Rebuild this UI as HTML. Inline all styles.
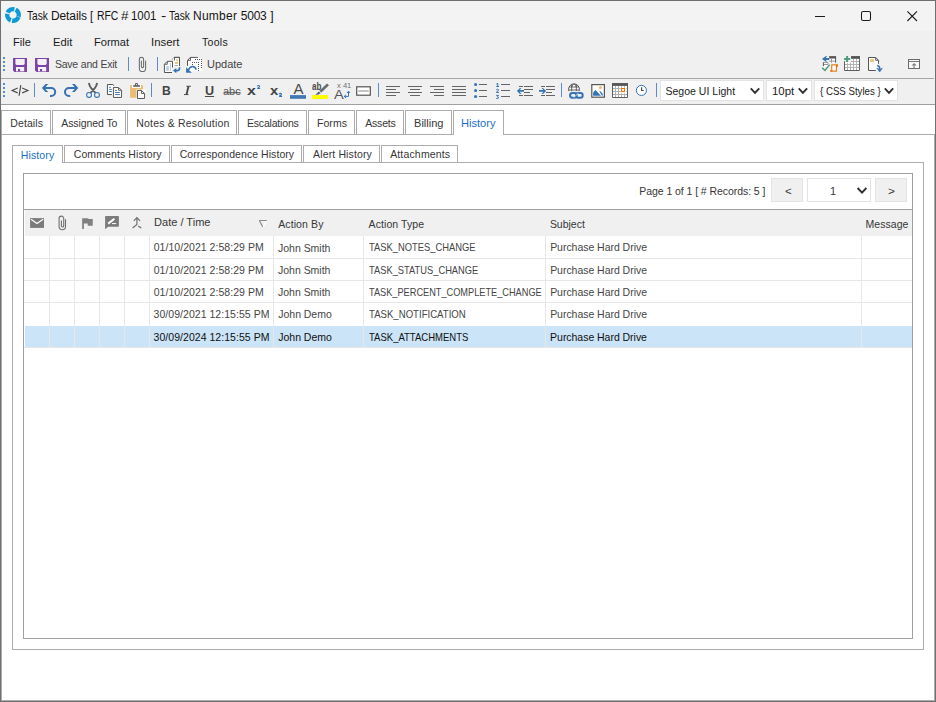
<!DOCTYPE html>
<html><head><meta charset="utf-8"><title>Task Details</title>
<style>
html,body{margin:0;padding:0;}
body{width:936px;height:702px;overflow:hidden;background:#fff;font-family:"Liberation Sans",sans-serif;position:relative;}
.a{position:absolute;box-sizing:border-box;}
.t{position:absolute;white-space:pre;transform-origin:0 0;}
.tab{position:absolute;box-sizing:border-box;border:1px solid #acacac;border-bottom:none;background:#fff;}
.vsep{position:absolute;width:1px;background:#5b8bd0;}
.dot{position:absolute;width:2px;height:2px;background:#4a8fd8;}
.cl{position:absolute;width:1px;background:#e7e7e7;}
.rl{position:absolute;height:1px;background:#e7e7e7;}
svg{position:absolute;overflow:visible;}
</style></head><body>
<!-- window frame -->
<div class="a" style="left:0;top:0;width:936px;height:702px;background:#6f6f6f;"></div>
<div class="a" style="left:1px;top:1px;width:934px;height:700px;background:#fff;"></div>
<!-- title + chrome -->
<div class="a" style="left:1px;top:1px;width:934px;height:30px;background:#f3f3f3;"></div>
<div class="a" style="left:1px;top:31px;width:934px;height:73px;background:#f0f0f0;"></div>
<div class="a" style="left:1px;top:78px;width:933px;height:1px;background:#a6a6a6;"></div>
<div class="a" style="left:1px;top:104px;width:934px;height:1px;background:#a0a0a0;"></div>
<!-- main tab page -->
<div class="a" style="left:1px;top:134px;width:934px;height:567px;border:1px solid #acacac;background:#fff;"></div>
<!-- main tabs -->
<div class="tab" style="left:1px;top:110px;width:50px;height:24px;"></div>
<div class="tab" style="left:52px;top:110px;width:74px;height:24px;"></div>
<div class="tab" style="left:127px;top:110px;width:110px;height:24px;"></div>
<div class="tab" style="left:238px;top:110px;width:69px;height:24px;"></div>
<div class="tab" style="left:308px;top:110px;width:47px;height:24px;"></div>
<div class="tab" style="left:356px;top:110px;width:48px;height:24px;"></div>
<div class="tab" style="left:405px;top:110px;width:47px;height:24px;"></div>
<div class="tab" style="left:453px;top:110px;width:51px;height:25px;"></div>
<!-- sub tab panel -->
<div class="a" style="left:12px;top:162px;width:912px;height:488px;border:1px solid #acacac;background:#fff;"></div>
<div class="tab" style="left:12px;top:145px;width:51px;height:18px;"></div>
<div class="tab" style="left:64px;top:145px;width:106px;height:17px;"></div>
<div class="tab" style="left:171px;top:145px;width:131px;height:17px;"></div>
<div class="tab" style="left:303px;top:145px;width:77px;height:17px;"></div>
<div class="tab" style="left:381px;top:145px;width:77px;height:17px;"></div>
<!-- grid container -->
<div class="a" style="left:23px;top:173px;width:890px;height:466px;border:1px solid #a0a0a0;background:#fff;"></div>
<!-- pager -->
<div class="a" style="left:771px;top:178px;width:32px;height:24px;background:#f0f0f0;border:1px solid #e3e3e3;"></div>
<div class="a" style="left:807px;top:178px;width:64px;height:24px;background:#fff;border:1px solid #e3e3e3;"></div>
<div class="a" style="left:875px;top:178px;width:32px;height:24px;background:#f0f0f0;border:1px solid #e3e3e3;"></div>
<!-- header -->
<div class="a" style="left:24px;top:209px;width:888px;height:1px;background:#a0a0a0;"></div>
<div class="a" style="left:25px;top:210px;width:887px;height:26px;background:#f0f0f0;"></div>
<!-- selected row -->
<div class="a" style="left:25px;top:326px;width:887px;height:21px;background:#cce4f7;"></div>
<!-- grid lines -->
<div class="cl" style="left:49px;top:236px;height:111px;"></div>
<div class="cl" style="left:74px;top:236px;height:111px;"></div>
<div class="cl" style="left:99px;top:236px;height:111px;"></div>
<div class="cl" style="left:124px;top:236px;height:111px;"></div>
<div class="cl" style="left:149px;top:236px;height:111px;"></div>
<div class="cl" style="left:273px;top:236px;height:111px;"></div>
<div class="cl" style="left:363px;top:236px;height:111px;"></div>
<div class="cl" style="left:545px;top:236px;height:111px;"></div>
<div class="cl" style="left:861px;top:236px;height:111px;"></div>
<div class="rl" style="left:24px;top:258px;width:888px;"></div>
<div class="rl" style="left:24px;top:280px;width:888px;"></div>
<div class="rl" style="left:24px;top:302px;width:888px;"></div>
<div class="rl" style="left:24px;top:347px;width:888px;"></div>
<!-- toolbar combos -->
<div class="a" style="left:660px;top:80px;width:104px;height:21px;background:#fff;border:1px solid #e3e3e3;"></div>
<div class="a" style="left:766px;top:80px;width:46px;height:21px;background:#fff;border:1px solid #e3e3e3;"></div>
<div class="a" style="left:814px;top:80px;width:84px;height:21px;background:#fff;border:1px solid #e3e3e3;"></div>
<!-- toolbar grips and separators -->
<div class="dot" style="left:3px;top:57px;"></div>
<div class="dot" style="left:3px;top:61px;"></div>
<div class="dot" style="left:3px;top:65px;"></div>
<div class="dot" style="left:3px;top:69px;"></div>
<div class="dot" style="left:3px;top:83px;"></div>
<div class="dot" style="left:3px;top:87px;"></div>
<div class="dot" style="left:3px;top:91px;"></div>
<div class="dot" style="left:3px;top:95px;"></div>
<div class="vsep" style="left:128px;top:57px;height:14px;"></div>
<div class="vsep" style="left:157px;top:57px;height:14px;"></div>
<div class="vsep" style="left:34px;top:83px;height:14px;"></div>
<div class="vsep" style="left:151px;top:83px;height:14px;"></div>
<div class="vsep" style="left:378px;top:83px;height:14px;"></div>
<div class="vsep" style="left:561px;top:83px;height:14px;"></div>
<div class="vsep" style="left:656px;top:83px;height:14px;"></div>
<!-- icons -->
<svg style="left:0;top:0" width="936" height="702" viewBox="0 0 936 702">
<circle cx="13" cy="15" r="5.8" fill="none" stroke="#0d9ad7" stroke-width="4.4" stroke-dasharray="7.7 1.41" transform="rotate(20 13 15)"/>
<path d="M815 16.5h10" stroke="#1b1b1b" stroke-width="1" fill="none"/>
<rect x="861.5" y="11.5" width="9" height="9" rx="1.6" fill="none" stroke="#1b1b1b" stroke-width="1.05"/>
<path d="M907.4 11.4L917 21M917 11.4L907.4 21" stroke="#1b1b1b" stroke-width="1.1" fill="none"/>
<g transform="translate(13,58)"><path d="M0 0h14v14H1.6L0 12.4z" fill="#7b44a6"/><path d="M2.4 1h9.3v4.6q0 1.4-1.4 1.4H3.8q-1.4 0-1.4-1.4z" fill="#f3f1f4"/><path d="M3 9h8.2v4.4H3z" fill="#f3f1f4"/><rect x="5" y="11" width="2.1" height="2.4" fill="#7b44a6"/></g>
<g transform="translate(35,58)"><path d="M0 0h14v14H1.6L0 12.4z" fill="#7b44a6"/><path d="M2.4 1h9.3v4.6q0 1.4-1.4 1.4H3.8q-1.4 0-1.4-1.4z" fill="#f3f1f4"/><path d="M3 9h8.2v4.4H3z" fill="#f3f1f4"/><rect x="5" y="11" width="2.1" height="2.4" fill="#7b44a6"/></g>
<path d="M141.4 61V66.5a1.1 1.1 0 0 0 2.2 0V59.4a2.125 2.125 0 0 0-4.25 0V68.4a3.125 3.125 0 0 0 6.25 0V61" fill="none" stroke="#6b6b6b" stroke-width="1.05" stroke-linecap="round"/>
<path d="M174.4 60.5V57.4H179.5V66" fill="#fff" stroke="#555555" stroke-width="1"/>
<path d="M171.9 59.5L174.4 57.4" stroke="#555555" stroke-width="1" stroke-dasharray="1 1" fill="none"/>
<rect x="173" y="58" width="6" height="8.5" fill="#fff"/>
<path d="M174.4 60.5V57.4H179.5V65.8" fill="none" stroke="#555555" stroke-width="1"/>
<rect x="176.2" y="59.1" width="1.7" height="1.7" fill="#e9bd74"/><rect x="175" y="62" width="3" height="1.8" fill="#e9bd74"/><rect x="174.3" y="65" width="3.6" height="0.8" fill="#999"/>
<path d="M164.4 64.3L167.3 61.35H172.5V72.5H164.4z" fill="#fff" stroke="#555555" stroke-width="1" stroke-linejoin="miter"/>
<path d="M167.3 61.6V64.3H164.6" fill="none" stroke="#555555" stroke-width="0.9"/>
<rect x="166.2" y="66.1" width="2.6" height="4.7" fill="#b9d0e8"/><rect x="169.9" y="63" width="1.1" height="7.8" fill="#b9d0e8"/>
<rect x="172" y="67.5" width="8.5" height="6" fill="#f0f0f0"/>
<path d="M179.5 67.2V68.2Q179.5 70.6 177 70.6H175" fill="none" stroke="#3572b4" stroke-width="1.6"/>
<path d="M173 70.6L176.3 68V73.2z" fill="#3572b4"/>
<path d="M188 65.8V60.7L190.4 57.9H202V71H188z" fill="#fff" opacity="0.9"/>
<path d="M187.5 65.8V60.5L190.2 57.4H197.9" fill="none" stroke="#555555" stroke-width="1"/>
<path d="M190.5 57.6V60.4H187.7" fill="none" stroke="#555555" stroke-width="0.9"/>
<rect x="195" y="59" width="1" height="1" fill="#555555"/><rect x="197" y="59" width="1" height="1" fill="#555555"/><rect x="199" y="59" width="1" height="1" fill="#555555"/><rect x="201" y="59" width="1" height="1" fill="#555555"/><rect x="201" y="61" width="1" height="1" fill="#555555"/><rect x="201" y="63" width="1" height="1" fill="#555555"/><rect x="201" y="65" width="1" height="1" fill="#555555"/><rect x="201" y="67" width="1" height="1" fill="#555555"/><rect x="192" y="62" width="1" height="1" fill="#555555"/><rect x="194" y="62" width="1" height="1" fill="#555555"/><rect x="196" y="62" width="1" height="1" fill="#555555"/><rect x="198" y="62" width="1" height="1" fill="#555555"/><rect x="192" y="64" width="1" height="1" fill="#555555"/><rect x="198" y="64" width="1" height="1" fill="#555555"/><rect x="198" y="66" width="1" height="1" fill="#555555"/><rect x="198" y="68" width="1" height="1" fill="#555555"/><rect x="198" y="70" width="1" height="1" fill="#555555"/>
<path d="M196.3 69.6Q195 66.4 192.4 66.6Q189.6 67 188.2 70.6" fill="none" stroke="#3572b4" stroke-width="1.5"/>
<path d="M186.1 67.3V72.8H191.9L189.6 70.8z" fill="#3572b4"/>
<rect x="829" y="56" width="7.2" height="7" fill="#fff"/>
<rect x="829.1" y="56.1" width="7" height="2.4" fill="#555555"/>
<path d="M835.6 58V62.7" stroke="#555555" stroke-width="1"/>
<path d="M829 61.2H835M831.5 58.5V62.7" stroke="#8e8e8e" stroke-width="0.9" fill="none"/>
<rect x="823" y="62" width="6" height="5" fill="#fff"/>
<path d="M823.4 62.3V66.2" stroke="#555555" stroke-width="1"/>
<path d="M823.4 62.4H828V64.5H824" stroke="#8e8e8e" stroke-width="0.9" fill="none"/>
<path d="M821.9 58.9L826 55.9H827L825.8 58H829.2V59.9H825.8L827 61.8H826z" fill="#3572b4"/>
<path d="M822.2 67.9L825 70.5L829.6 64.6" fill="none" stroke="#4a9e7c" stroke-width="1.5"/>
<rect x="831.75" y="64.85" width="4.6" height="6.3" fill="#fff" stroke="#e8730c" stroke-width="1.1"/>
<path d="M836.3 64.3H837.3Q838 64.3 838 65V66.7H836.3z" fill="#e8730c"/><rect x="830" y="70.3" width="2.3" height="1.4" fill="#e8730c"/>
<rect x="844.1" y="56.1" width="15.7" height="14.7" fill="#b4b4b4"/>
<rect x="844.1" y="56.1" width="15.7" height="2.6" fill="#555555"/>
<path d="M844.6 56.1V70.4H859.3V56.1" fill="none" stroke="#555555" stroke-width="1"/>
<rect x="845" y="59" width="2" height="2" fill="#fff"/><rect x="845" y="62" width="2" height="2" fill="#fff"/><rect x="845" y="65" width="2" height="2" fill="#fff"/><rect x="845" y="68" width="2" height="2" fill="#fff"/><rect x="848" y="59" width="2" height="2" fill="#fff"/><rect x="848" y="62" width="2" height="2" fill="#fff"/><rect x="848" y="65" width="2" height="2" fill="#fff"/><rect x="848" y="68" width="2" height="2" fill="#fff"/><rect x="851" y="59" width="2" height="2" fill="#fff"/><rect x="851" y="62" width="2" height="2" fill="#fff"/><rect x="851" y="65" width="2" height="2" fill="#fff"/><rect x="851" y="68" width="2" height="2" fill="#fff"/><rect x="854" y="59" width="2" height="2" fill="#fff"/><rect x="854" y="62" width="2" height="2" fill="#fff"/><rect x="854" y="65" width="2" height="2" fill="#fff"/><rect x="854" y="68" width="2" height="2" fill="#fff"/><rect x="857" y="59" width="2" height="2" fill="#fff"/><rect x="857" y="62" width="2" height="2" fill="#fff"/><rect x="857" y="65" width="2" height="2" fill="#fff"/><rect x="857" y="68" width="2" height="2" fill="#fff"/>
<rect x="843" y="55" width="8" height="8" fill="#f0f0f0"/><rect x="848" y="59" width="2" height="2" fill="#fff"/><rect x="845" y="62.1" width="2" height="0.9" fill="#fff"/><rect x="848" y="62.1" width="2" height="0.9" fill="#fff"/>
<path d="M844.1 61.2V63" stroke="#555555" stroke-width="1" transform="translate(0.5,0)"/>
<path d="M846 56.1h2v2h2v2h-2v2h-2v-2h-2v-2h2z" fill="#4a9e7c" transform="translate(0.1,0)"/>
<path d="M868.5 57.5H875.8L878.55 60.4V70.5H868.5z" fill="#fff"/>
<path d="M878.55 63.8V60.4L875.8 57.5H868.5V70.5H875.8" fill="none" stroke="#555555" stroke-width="1"/>
<path d="M875.7 57.7V60.3H878.4" fill="none" stroke="#555555" stroke-width="0.9"/>
<rect x="870.2" y="59.2" width="3.7" height="2.7" fill="#e9bd74"/>
<rect x="876.5" y="64.5" width="6" height="8" fill="#f0f0f0"/>
<path d="M877.2 65.6Q879.7 66 879.7 68.5V69.5" fill="none" stroke="#3572b4" stroke-width="1.5"/>
<path d="M877 68.2L879.7 69.6L882.3 68.2L879.7 72z" fill="#3572b4" stroke="#3572b4" stroke-width="0.6" stroke-linejoin="round"/>
<rect x="908.5" y="59.5" width="11" height="9" fill="#f9f9f9" stroke="#6b6b6b" stroke-width="1"/>
<path d="M908.5 61.5H919.5" stroke="#6b6b6b" stroke-width="0.9"/>
<path d="M911.6 65.4L914.1 62.9L916.6 65.4z" fill="#7d7d7d"/><rect x="913.4" y="65" width="1.4" height="3" fill="#9a9a9a"/>
<path d="M17.7 88.05L12.2 90.45L17.7 92.85M22.2 88.05L27.9 90.45L22.2 92.85" fill="none" stroke="#4a4a4a" stroke-width="1.15"/>
<path d="M20.8 85.15L19.1 95.75" fill="none" stroke="#4a4a4a" stroke-width="1.2"/>
<g ><path d="M45 88H51.2A4 4 0 0 1 51.2 96H50" fill="none" stroke="#3572b4" stroke-width="2"/><path d="M41.9 88.05L45.5 84.1H48.2L45.4 87.2V88.9L48.2 91.9H45.5z" fill="#3572b4"/></g>
<g transform="translate(120.2,0) scale(-1,1)"><path d="M45 88H51.2A4 4 0 0 1 51.2 96H50" fill="none" stroke="#3572b4" stroke-width="2"/><path d="M41.9 88.05L45.5 84.1H48.2L45.4 87.2V88.9L48.2 91.9H45.5z" fill="#3572b4"/></g>
<path d="M89.1 83.6Q89.4 86 91.4 88.4L95 92.3M96.9 83.6Q96.6 86 94.6 88.4L91 92.3" fill="none" stroke="#5c5c5c" stroke-width="1.9" stroke-linecap="round"/>
<circle cx="89.05" cy="94.9" r="2.45" fill="none" stroke="#3572b4" stroke-width="1.05"/><circle cx="97" cy="94.9" r="2.45" fill="none" stroke="#3572b4" stroke-width="1.05"/>
<path d="M107.45 84.5H112.75L114 85.6V94.55H107.45z" fill="#fff"/>
<path d="M111.9 94.55H107.45V84.5H112.75L114.2 85.8" fill="none" stroke="#555555" stroke-width="1"/>
<path d="M109.2 87.4H110.9M109.2 89.45H111.9M109.2 91.5H111.9" stroke="#3572b4" stroke-width="0.95"/>
<path d="M112.4 86.6H119L122.6 89.8V98.4H112.4z" fill="#fff" opacity="0.85"/>
<path d="M113.4 87.55H118.55L121.6 90.1V97.45H113.4z" fill="#fff" stroke="#555555" stroke-width="1"/>
<path d="M118.5 87.8V90.3H121.4" fill="none" stroke="#555555" stroke-width="0.9"/>
<path d="M115.1 90.45H116.85M115.1 92.5H119.9M115.1 94.55H119.9" stroke="#3572b4" stroke-width="0.95"/>
<rect x="130.1" y="85" width="12.8" height="12.8" rx="0.6" fill="#e9bd74"/>
<path d="M132 84.5H141V88H132z" fill="#fbfbfb"/>
<rect x="133.2" y="85.15" width="6.7" height="1.6" fill="#5a5a5a"/><path d="M135.5 85.3V83.6H137.4V85.3" fill="none" stroke="#5a5a5a" stroke-width="1"/>
<rect x="136.4" y="89.4" width="9.3" height="10" fill="#fbfbfb"/>
<path d="M137.45 90.45H141.55L144.6 93.5V98.5H137.45z" fill="#fff" stroke="#555555" stroke-width="1"/>
<path d="M141.5 90.7V93.5H144.4" fill="none" stroke="#555555" stroke-width="0.9"/>
<rect x="290" y="95.1" width="16" height="3.7" fill="#3f78b5"/>
<rect x="312" y="95" width="16.2" height="4" fill="#ffff00"/>
<path d="M327 83.4L329 85.2L321.4 92.6L319.4 90.8z" fill="#6a6a6a"/><path d="M318.8 91.4L320.8 93.2L317.6 94.8L315.4 94.7z" fill="#5c5c66"/>
<path d="M348.5 91.6V96.4H344.4" fill="none" stroke="#3572b4" stroke-width="1"/><path d="M346.9 93L348.5 91.2L350.1 93M346 94.8L344.2 96.4L346 98" fill="none" stroke="#3572b4" stroke-width="1"/>
<rect x="356.7" y="86.8" width="13.6" height="8.4" fill="#fff" stroke="#555555" stroke-width="1.2"/><rect x="358.2" y="90.3" width="10.5" height="1.4" fill="#aaaaaa"/>
<rect x="386" y="86" width="14" height="1" fill="#646464"/><rect x="386" y="89" width="10" height="1" fill="#646464"/><rect x="386" y="92" width="14" height="1" fill="#646464"/><rect x="386" y="95" width="10" height="1" fill="#646464"/>
<rect x="408" y="86" width="14" height="1" fill="#646464"/><rect x="410" y="89" width="10" height="1" fill="#646464"/><rect x="408" y="92" width="14" height="1" fill="#646464"/><rect x="410" y="95" width="10" height="1" fill="#646464"/>
<rect x="430" y="86" width="14" height="1" fill="#646464"/><rect x="434" y="89" width="10" height="1" fill="#646464"/><rect x="430" y="92" width="14" height="1" fill="#646464"/><rect x="434" y="95" width="10" height="1" fill="#646464"/>
<rect x="452" y="86" width="14" height="1" fill="#646464"/><rect x="452" y="89" width="14" height="1" fill="#646464"/><rect x="452" y="92" width="14" height="1" fill="#646464"/><rect x="452" y="95" width="14" height="1" fill="#646464"/>
<rect x="479" y="84" width="8" height="1" fill="#646464"/><rect x="479" y="90" width="8" height="1" fill="#646464"/><rect x="479" y="96" width="8" height="1" fill="#646464"/>
<circle cx="475.6" cy="84.5" r="1.55" fill="#3572b4"/><circle cx="475.6" cy="90.5" r="1.55" fill="#3572b4"/><circle cx="475.6" cy="96.5" r="1.55" fill="#3572b4"/>
<rect x="501" y="84" width="9" height="1" fill="#646464"/><rect x="501" y="90" width="9" height="1" fill="#646464"/><rect x="501" y="96" width="9" height="1" fill="#646464"/>
<path d="M496.3 84.2L497.8 83.3V86.4M496.2 86.5H499" fill="none" stroke="#3572b4" stroke-width="1"/>
<path d="M496.2 89.8Q497.4 88.8 498.5 89.7Q498.8 90.6 496.3 92.4H499" fill="none" stroke="#3572b4" stroke-width="1"/>
<path d="M496.2 95.4H498.6L497.3 96.8Q499 97 498.5 98.1Q497.6 98.8 496.1 98.3" fill="none" stroke="#3572b4" stroke-width="1"/>
<rect x="519" y="86" width="4" height="1" fill="#646464"/><rect x="524" y="86" width="9" height="1" fill="#646464"/><rect x="524" y="89" width="9" height="1" fill="#646464"/><rect x="524" y="92" width="6" height="1" fill="#646464"/><rect x="519" y="95" width="4" height="1" fill="#646464"/><rect x="524" y="95" width="9" height="1" fill="#646464"/>
<path d="M516.9 90.9L520 88H521.4L519.6 90H524V91.8H519.6L521.4 93.9H520z" fill="#3572b4"/>
<rect x="541" y="86" width="4" height="1" fill="#646464"/><rect x="546" y="86" width="9" height="1" fill="#646464"/><rect x="546" y="89" width="9" height="1" fill="#646464"/><rect x="546" y="92" width="6" height="1" fill="#646464"/><rect x="541" y="95" width="4" height="1" fill="#646464"/><rect x="546" y="95" width="9" height="1" fill="#646464"/>
<path d="M546.1 90.9L543 88H541.6L543.4 90H539V91.8H543.4L541.6 93.9H543z" fill="#3572b4"/>
<circle cx="574" cy="89.3" r="5.4" fill="#fff" stroke="#555555" stroke-width="1"/>
<path d="M569.2 87H578.8M568.7 90H579.3M571.7 84.6V92M576.3 84.6V92M571.7 87Q572 84.5 574 83.9Q576 84.5 576.3 87" fill="none" stroke="#555555" stroke-width="0.9"/>
<rect x="568" y="91.2" width="16.8" height="8.6" fill="#f0f0f0"/>
<rect x="570.1" y="93.1" width="6.6" height="4.6" rx="2.3" fill="none" stroke="#3572b4" stroke-width="2"/><rect x="576" y="93.1" width="6.7" height="4.6" rx="2.3" fill="none" stroke="#3572b4" stroke-width="2"/>
<path d="M573.6 97.6L578.5 93.2" stroke="#f0f0f0" stroke-width="0.9"/>
<rect x="591.8" y="84.6" width="12.6" height="12.6" fill="#fff" stroke="#555555" stroke-width="1.2"/>
<circle cx="600.5" cy="87.5" r="1.55" fill="#e9bd74"/>
<path d="M593.1 95.7V92.6L595.5 90L601 95.7z" fill="#3572b4"/><path d="M599.2 91.2H600.4L602.7 93.8V95.7H602z" fill="#3572b4"/>
<rect x="612.1" y="83.1" width="15.8" height="14.8" fill="#b0b0b0"/><rect x="612.1" y="83.1" width="15.8" height="2.7" fill="#555555"/>
<path d="M612.6 83.1V97.4H627.4V83.1" fill="none" stroke="#555555" stroke-width="1"/>
<rect x="613" y="86" width="2" height="2" fill="#fff"/><rect x="613" y="89" width="2" height="2" fill="#fff"/><rect x="613" y="92" width="2" height="2" fill="#fff"/><rect x="613" y="95" width="2" height="2" fill="#fff"/><rect x="616" y="86" width="2" height="2" fill="#fff"/><rect x="616" y="89" width="2" height="2" fill="#fff"/><rect x="616" y="92" width="2" height="2" fill="#fff"/><rect x="616" y="95" width="2" height="2" fill="#fff"/><rect x="619" y="86" width="2" height="2" fill="#fff"/><rect x="619" y="89" width="2" height="2" fill="#fff"/><rect x="619" y="92" width="2" height="2" fill="#fff"/><rect x="619" y="95" width="2" height="2" fill="#fff"/><rect x="622" y="86" width="2" height="2" fill="#fff"/><rect x="622" y="89" width="2" height="2" fill="#fff"/><rect x="622" y="92" width="2" height="2" fill="#fff"/><rect x="622" y="95" width="2" height="2" fill="#fff"/><rect x="625" y="86" width="2" height="2" fill="#fff"/><rect x="625" y="89" width="2" height="2" fill="#fff"/><rect x="625" y="92" width="2" height="2" fill="#fff"/><rect x="625" y="95" width="2" height="2" fill="#fff"/>
<rect x="620" y="87" width="6" height="6" fill="#fff"/><rect x="621.5" y="88.5" width="3" height="3" fill="#fff" stroke="#e8730c" stroke-width="1.1"/>
<rect x="621" y="87" width="1" height="1" fill="#c8c8c8"/><rect x="624" y="87" width="1" height="1" fill="#c8c8c8"/><rect x="620" y="88" width="1" height="1" fill="#c8c8c8"/><rect x="620" y="91" width="1" height="1" fill="#c8c8c8"/><rect x="626" y="88" width="1" height="1" fill="#c8c8c8"/><rect x="626" y="91" width="1" height="1" fill="#c8c8c8"/><rect x="621" y="93" width="1" height="1" fill="#c8c8c8"/><rect x="624" y="93" width="1" height="1" fill="#c8c8c8"/>
<circle cx="641.4" cy="90.4" r="5.05" fill="#fff" stroke="#3572b4" stroke-width="1"/><path d="M641.6 87.2V90.5H643.7" fill="none" stroke="#4a4a4a" stroke-width="1.2"/>
<path d="M750.8 88.4L755.0 92.80000000000001L759.1999999999999 88.4" fill="none" stroke="#2e2e2e" stroke-width="1.9"/>
<path d="M798.7 88.4L802.9000000000001 92.80000000000001L807.1 88.4" fill="none" stroke="#2e2e2e" stroke-width="1.9"/>
<path d="M884.8 88.4L889.0 92.80000000000001L893.1999999999999 88.4" fill="none" stroke="#2e2e2e" stroke-width="1.9"/>
<path d="M857.6 188.0L862.0 192.6L866.4 188.0" fill="none" stroke="#2e2e2e" stroke-width="1.9"/>
<rect x="30.1" y="218.1" width="13.9" height="9.8" fill="#7b7b7b"/><path d="M31 219.2L37 223.5L43.1 219.2" fill="none" stroke="#fff" stroke-width="1.2"/>
<path d="M61.4 220.5V225.75a1.15 1.15 0 0 0 2.3 0V218.4a2.3 2.3 0 0 0-4.6 0V226.5a3.2 3.2 0 0 0 6.4 0V219.2" fill="#f8f8f8" fill-opacity="0" stroke="#707070" stroke-width="1.1"/>
<path d="M82.15 218.15H88.3V219H92.75V225.85H87.7V223.6H83.9V228.9H82.15z" fill="#808080"/>
<path d="M105.1 216.6q0-0.6 0.6-0.6H118.3q0.6 0 0.6 0.6V226.1q0 0.6-0.6 0.6H108.2L105.1 229.3z" fill="#7b7b7b"/>
<path d="M108.2 223.6L114.4 218.7" stroke="#fff" stroke-width="2"/><path d="M112 223.6H116.2" stroke="#fff" stroke-width="1"/>
<path d="M136.9 217.9V224.4L132.6 228M133.8 220.9L136.9 217.7L140 220.9M138.2 225.9L141.3 228" fill="none" stroke="#707070" stroke-width="1.2"/>
<path d="M259 220.5H267" stroke="#8c8c8c" stroke-width="1"/><path d="M259.6 221L262.8 227" stroke="#8c8c8c" stroke-width="1.2"/><path d="M266.6 221L263.2 227" stroke="#ffffff" stroke-width="1.2"/>
<rect x="224" y="92.2" width="16.6" height="1" fill="#555555"/>
<rect x="204.9" y="96" width="9.2" height="0.95" fill="#444444"/>
<path transform="translate(0,0)" d="M257.1 86.2Q258.4 84.9 259.5 85.9Q260 87 257.3 88.45H260.2" fill="none" stroke="#3572b4" stroke-width="1.1"/>
<path transform="translate(21.9,7.9)" d="M257.1 86.2Q258.4 84.9 259.5 85.9Q260 87 257.3 88.45H260.2" fill="none" stroke="#3572b4" stroke-width="1.1"/>
<path d="M188.5 86.2L186.5 94.5" stroke="#444" stroke-width="1.8" fill="none"/><path d="M186.4 86.25H190.9M184 94.55H188.5" stroke="#444" stroke-width="0.95" fill="none"/>
</svg>
<!-- texts -->
<span class="t" style="left:26.6px;top:10px;font-size:12px;line-height:12px;color:#151515;transform:scaleX(0.8482);">Task</span>
<span class="t" style="left:50.98px;top:10px;font-size:12px;line-height:12px;color:#151515;letter-spacing:-0.106px;">Details</span>
<span class="t" style="left:90.1px;top:10px;font-size:12px;line-height:12px;color:#151515;transform:scaleX(0.9341);">[</span>
<span class="t" style="left:96.85px;top:10px;font-size:12px;line-height:12px;color:#151515;transform:scaleX(0.8664);">RFC</span>
<span class="t" style="left:120.82px;top:10px;font-size:12px;line-height:12px;color:#151515;transform:scaleX(1.1125);">#</span>
<span class="t" style="left:131.22px;top:10px;font-size:12px;line-height:12px;color:#151515;transform:scaleX(0.954);">1001</span>
<span class="t" style="left:160.68px;top:10px;font-size:12px;line-height:12px;color:#151515;transform:scaleX(1.3077);">-</span>
<span class="t" style="left:169.2px;top:10px;font-size:12px;line-height:12px;color:#151515;transform:scaleX(0.8482);">Task</span>
<span class="t" style="left:193.08px;top:10px;font-size:12px;line-height:12px;color:#151515;letter-spacing:0.223px;">Number</span>
<span class="t" style="left:240.87px;top:10px;font-size:12px;line-height:12px;color:#151515;letter-spacing:-0.271px;">5003</span>
<span class="t" style="left:270.31px;top:10px;font-size:12px;line-height:12px;color:#151515;">]</span>
<span class="t" style="left:13.06px;top:37px;font-size:10.5px;line-height:10.5px;color:#1b1b1b;transform:scaleX(1.0541);">File</span>
<span class="t" style="left:53.04px;top:37px;font-size:10.5px;line-height:10.5px;color:#1b1b1b;transform:scaleX(1.063);">Edit</span>
<span class="t" style="left:94.46px;top:37px;font-size:10.5px;line-height:10.5px;color:#1b1b1b;transform:scaleX(1.0553);">Format</span>
<span class="t" style="left:151.02px;top:37px;font-size:10.5px;line-height:10.5px;color:#1b1b1b;transform:scaleX(1.0841);">Insert</span>
<span class="t" style="left:202.09px;top:37px;font-size:10.5px;line-height:10.5px;color:#1b1b1b;letter-spacing:0.26px;">Tools</span>
<span class="t" style="left:54.88px;top:59px;font-size:10.5px;line-height:10.5px;color:#444444;letter-spacing:-0.198px;">Save and Exit</span>
<span class="t" style="left:207.42px;top:59px;font-size:10.5px;line-height:10.5px;color:#444444;transform:scaleX(1.0482);">Update</span>
<span class="t" style="left:665.48px;top:86px;font-size:10.5px;line-height:10.5px;color:#1b1b1b;letter-spacing:0.014px;">Segoe UI Light</span>
<span class="t" style="left:772.15px;top:86px;font-size:10.5px;line-height:10.5px;color:#1b1b1b;transform:scaleX(1.0909);">10pt</span>
<span class="t" style="left:819.57px;top:86px;font-size:10.5px;line-height:10.5px;color:#1b1b1b;transform:scaleX(0.9205);">{ CSS Styles }</span>
<span class="t" style="left:10.29px;top:118px;font-size:10.5px;line-height:10.5px;color:#363636;letter-spacing:0.088px;">Details</span>
<span class="t" style="left:61.27px;top:118px;font-size:10.5px;line-height:10.5px;color:#363636;letter-spacing:-0.088px;">Assigned To</span>
<span class="t" style="left:136.29px;top:118px;font-size:10.5px;line-height:10.5px;color:#363636;letter-spacing:0.185px;">Notes &amp; Resolution</span>
<span class="t" style="left:246.95px;top:118px;font-size:10.5px;line-height:10.5px;color:#363636;letter-spacing:-0.185px;">Escalations</span>
<span class="t" style="left:316.95px;top:118px;font-size:10.5px;line-height:10.5px;color:#363636;letter-spacing:0.089px;">Forms</span>
<span class="t" style="left:365.27px;top:118px;font-size:10.5px;line-height:10.5px;color:#363636;letter-spacing:-0.198px;">Assets</span>
<span class="t" style="left:413.79px;top:118px;font-size:10.5px;line-height:10.5px;color:#363636;transform:scaleX(1.0532);">Billing</span>
<span class="t" style="left:460.84px;top:118px;font-size:10.5px;line-height:10.5px;color:#1a6fc9;transform:scaleX(1.0562);">History</span>
<span class="t" style="left:20.65px;top:150px;font-size:10.5px;line-height:10.5px;color:#1a6fc9;letter-spacing:0.162px;">History</span>
<span class="t" style="left:73.73px;top:149px;font-size:10.5px;line-height:10.5px;color:#363636;letter-spacing:0.1px;">Comments History</span>
<span class="t" style="left:179.69px;top:149px;font-size:10.5px;line-height:10.5px;color:#363636;letter-spacing:0.057px;">Correspondence History</span>
<span class="t" style="left:313.07px;top:149px;font-size:10.5px;line-height:10.5px;color:#363636;letter-spacing:0.136px;">Alert History</span>
<span class="t" style="left:390.13px;top:149px;font-size:10.5px;line-height:10.5px;color:#363636;letter-spacing:0.164px;">Attachments</span>
<span class="t" style="left:639.29px;top:186px;font-size:10.5px;line-height:10.5px;color:#363636;letter-spacing:-0.064px;">Page 1 of 1 [ # Records: 5 ]</span>
<span class="t" style="left:785.0px;top:186px;font-size:10.5px;line-height:10.5px;color:#363636;transform:scaleX(1.0948);">&lt;</span>
<span class="t" style="left:829.79px;top:186px;font-size:10.5px;line-height:10.5px;color:#363636;transform:scaleX(1.0378);">1</span>
<span class="t" style="left:887.63px;top:186px;font-size:10.5px;line-height:10.5px;color:#363636;transform:scaleX(1.1294);">&gt;</span>
<span class="t" style="left:153.59px;top:217px;font-size:10.5px;line-height:10.5px;color:#363636;transform:scaleX(1.0525);">Date / Time</span>
<span class="t" style="left:278.16px;top:219px;font-size:10.5px;line-height:10.5px;color:#363636;letter-spacing:0.116px;">Action By</span>
<span class="t" style="left:368.61px;top:219px;font-size:10.5px;line-height:10.5px;color:#363636;letter-spacing:0.074px;">Action Type</span>
<span class="t" style="left:549.88px;top:219px;font-size:10.5px;line-height:10.5px;color:#363636;letter-spacing:-0.009px;">Subject</span>
<span class="t" style="left:865.45px;top:219px;font-size:10.5px;line-height:10.5px;color:#363636;letter-spacing:0.068px;">Message</span>
<span class="t" style="left:153.69px;top:242px;font-size:10.5px;line-height:10.5px;color:#454545;letter-spacing:0.042px;">01/10/2021 2:58:29 PM</span>
<span class="t" style="left:278.02px;top:243px;font-size:10.5px;line-height:10.5px;color:#454545;letter-spacing:-0.014px;">John Smith</span>
<span class="t" style="left:368.64px;top:242px;font-size:10.5px;line-height:10.5px;color:#454545;transform:scaleX(0.8921);">TASK_NOTES_CHANGE</span>
<span class="t" style="left:550.17px;top:242px;font-size:10.5px;line-height:10.5px;color:#454545;letter-spacing:-0.035px;">Purchase Hard Drive</span>
<span class="t" style="left:153.69px;top:265px;font-size:10.5px;line-height:10.5px;color:#454545;letter-spacing:0.042px;">01/10/2021 2:58:29 PM</span>
<span class="t" style="left:278.02px;top:265px;font-size:10.5px;line-height:10.5px;color:#454545;letter-spacing:-0.014px;">John Smith</span>
<span class="t" style="left:368.64px;top:265px;font-size:10.5px;line-height:10.5px;color:#454545;transform:scaleX(0.8877);">TASK_STATUS_CHANGE</span>
<span class="t" style="left:550.17px;top:265px;font-size:10.5px;line-height:10.5px;color:#454545;letter-spacing:-0.035px;">Purchase Hard Drive</span>
<span class="t" style="left:153.69px;top:287px;font-size:10.5px;line-height:10.5px;color:#454545;letter-spacing:0.042px;">01/10/2021 2:58:29 PM</span>
<span class="t" style="left:278.02px;top:287px;font-size:10.5px;line-height:10.5px;color:#454545;letter-spacing:-0.014px;">John Smith</span>
<span class="t" style="left:368.64px;top:287px;font-size:10.5px;line-height:10.5px;color:#454545;transform:scaleX(0.8765);">TASK_PERCENT_COMPLETE_CHANGE</span>
<span class="t" style="left:550.17px;top:287px;font-size:10.5px;line-height:10.5px;color:#454545;letter-spacing:-0.035px;">Purchase Hard Drive</span>
<span class="t" style="left:153.57px;top:309px;font-size:10.5px;line-height:10.5px;color:#454545;letter-spacing:0.041px;">30/09/2021 12:15:55 PM</span>
<span class="t" style="left:278.31px;top:309px;font-size:10.5px;line-height:10.5px;color:#454545;letter-spacing:-0.033px;">John Demo</span>
<span class="t" style="left:368.64px;top:309px;font-size:10.5px;line-height:10.5px;color:#454545;transform:scaleX(0.9144);">TASK_NOTIFICATION</span>
<span class="t" style="left:550.17px;top:309px;font-size:10.5px;line-height:10.5px;color:#454545;letter-spacing:-0.035px;">Purchase Hard Drive</span>
<span class="t" style="left:153.57px;top:332px;font-size:10.5px;line-height:10.5px;color:#101010;letter-spacing:0.041px;">30/09/2024 12:15:55 PM</span>
<span class="t" style="left:278.33px;top:332px;font-size:10.5px;line-height:10.5px;color:#101010;letter-spacing:-0.033px;">John Demo</span>
<span class="t" style="left:368.64px;top:332px;font-size:10.5px;line-height:10.5px;color:#101010;transform:scaleX(0.9057);">TASK_ATTACHMENTS</span>
<span class="t" style="left:550.12px;top:332px;font-size:10.5px;line-height:10.5px;color:#101010;letter-spacing:-0.035px;">Purchase Hard Drive</span>
<span class="t" style="left:161.85px;top:84px;font-size:13px;line-height:13px;color:#444444;transform:scaleX(0.9329);font-weight:bold;">B</span>
<span class="t" style="left:205.23px;top:84.5px;font-size:12px;line-height:12px;color:#444444;transform:scaleX(1.0462);font-weight:bold;">U</span>
<span class="t" style="left:223.06px;top:87px;font-size:10px;line-height:10px;color:#555555;transform:scaleX(1.0985);">abc</span>
<span class="t" style="left:247.43px;top:84px;font-size:13.5px;line-height:13.5px;color:#444444;transform:scaleX(1.1817);font-weight:bold;">x</span>
<span class="t" style="left:270.39px;top:84px;font-size:13.5px;line-height:13.5px;color:#444444;transform:scaleX(1.104);font-weight:bold;">x</span>
<span class="t" style="left:293.48px;top:81px;font-size:15px;line-height:15px;color:#4a4a4a;">A</span>
<span class="t" style="left:311.82px;top:82px;font-size:10px;line-height:10px;color:#4a4a4a;transform:scaleX(0.8003);font-weight:bold;">ab</span>
<span class="t" style="left:336.92px;top:82px;font-size:7px;line-height:7px;color:#707070;transform:scaleX(1.0819);">x 41</span>
<span class="t" style="left:334.47px;top:87.8px;font-size:13px;line-height:13px;color:#555555;transform:scaleX(1.1246);">A</span>
</body></html>
